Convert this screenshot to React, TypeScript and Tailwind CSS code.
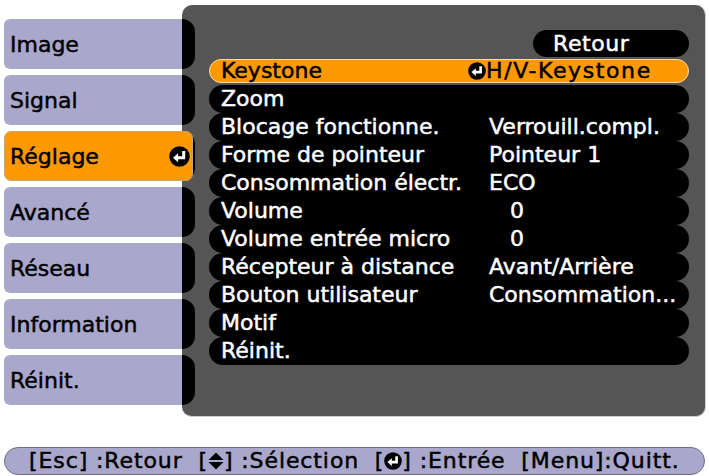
import React from "react";

const TABS = ["Image", "Signal", "Réglage", "Avancé", "Réseau", "Information", "Réinit."];
const SELECTED_TAB = "Réglage";

interface Row {
  label: string;
  value?: string;
  indent?: boolean;
}

const ROWS: Row[] = [
  { label: "Keystone", value: "H/V-Keystone" },
  { label: "Zoom" },
  { label: "Blocage fonctionne.", value: "Verrouill.compl." },
  { label: "Forme de pointeur", value: "Pointeur 1" },
  { label: "Consommation électr.", value: "ECO" },
  { label: "Volume", value: "0", indent: true },
  { label: "Volume entrée micro", value: "0", indent: true },
  { label: "Récepteur à distance", value: "Avant/Arrière" },
  { label: "Bouton utilisateur", value: "Consommation..." },
  { label: "Motif" },
  { label: "Réinit." },
];

// black disc with a white return arrow
const EnterIcon: React.FC<{ size?: number }> = ({ size = 17 }) => (
  <svg
    width={size}
    height={size}
    viewBox="0 0 18 18"
    className="shrink-0"
    style={{ width: size, height: size }}
  >
    <circle cx="9" cy="9" r="8.8" fill="#000" />
    <path d="M12.6 4.2v5.9H7.2" stroke="#fff" strokeWidth="2.6" fill="none" />
    <path d="M3.4 10.1l4.4-3.8v7.6z" fill="#fff" />
  </svg>
);

const UpDownIcon: React.FC = () => (
  <svg width="16" height="18" viewBox="0 0 16 18" className="shrink-0">
    <path d="M0.5 8L8 0.5L15.5 8z" fill="#000" />
    <path d="M0.5 10L8 17.5L15.5 10z" fill="#000" />
  </svg>
);

const App: React.FC = () => {
  return (
    <div className="w-[709px] h-[476px] bg-white overflow-hidden font-['DejaVu_Sans',sans-serif] text-[22px] [-webkit-text-stroke:0.5px]">
      <div className="flex pt-[5px] pl-[4px]">
        {/* Left menu tabs */}
        <nav className="relative z-10 w-[178px] flex flex-col gap-[6px] pt-[14px]">
          {TABS.map((tab) =>
            tab === SELECTED_TAB ? (
              <div
                key={tab}
                className="w-[189px] h-[50px] bg-[#ff9900] rounded-[7px] border border-[#c9a46a] flex items-center justify-between pl-[5px] pr-[2px] text-black"
              >
                <span>{tab}</span>
                <EnterIcon size={21} />
              </div>
            ) : (
              <div
                key={tab}
                className="h-[50px] bg-[#a9a8cc] rounded-l-[6px] flex items-center pl-[6px] text-black"
              >
                {tab}
              </div>
            )
          )}
        </nav>

        {/* Settings panel */}
        <section className="w-[524px] h-[412px] bg-[#555555] rounded-[10px] border-r border-b border-[#cfcfcf] flex">
          <div className="w-[13px] flex flex-col gap-[6px] pt-[14px]">
            {TABS.map((tab) => (
              <div key={tab} className="h-[50px] bg-black rounded-r-[13px]" />
            ))}
          </div>

          <div className="flex-1 flex flex-col pl-[14px] pr-[16px] pt-[25px]">
            <div className="self-end w-[156px] h-[27px] bg-black rounded-full flex items-center pl-[20px] text-white leading-none tracking-[0.6px]">
              Retour
            </div>

            <div className="flex flex-col">
              {ROWS.map((row, i) =>
                i === 0 ? (
                  <div key={row.label} className="h-[28px] py-[2px]">
                    <div className="h-full bg-[#ff9900] rounded-full border border-[#ffd9a0] flex items-center pl-[11px] text-black leading-none">
                      <span className="w-[247px] shrink-0">{row.label}</span>
                      <EnterIcon size={18} />
                      <span className="tracking-[1.6px]">{row.value}</span>
                    </div>
                  </div>
                ) : (
                  <div
                    key={row.label}
                    className="h-[28px] bg-black rounded-full flex items-center pl-[12px] text-white leading-none"
                  >
                    <span className="w-[268px] shrink-0">{row.label}</span>
                    {row.value && (
                      <span className={row.indent ? "pl-[21px]" : ""}>{row.value}</span>
                    )}
                  </div>
                )
              )}
            </div>
          </div>
        </section>
      </div>

      {/* Key help bar */}
      <footer className="mt-[30px] mx-[4px] h-[28px] bg-[#a9a8cc] rounded-full border border-[#6d6d84] flex items-center pl-[24px] text-black leading-none tracking-[0.9px]">
        <span className="whitespace-pre">[Esc] :Retour  [</span>
        <UpDownIcon />
        <span className="whitespace-pre">] :Sélection  [</span>
        <EnterIcon size={18} />
        <span className="whitespace-pre">] :Entrée  [Menu]:Quitt.</span>
      </footer>
    </div>
  );
};

export default App;
